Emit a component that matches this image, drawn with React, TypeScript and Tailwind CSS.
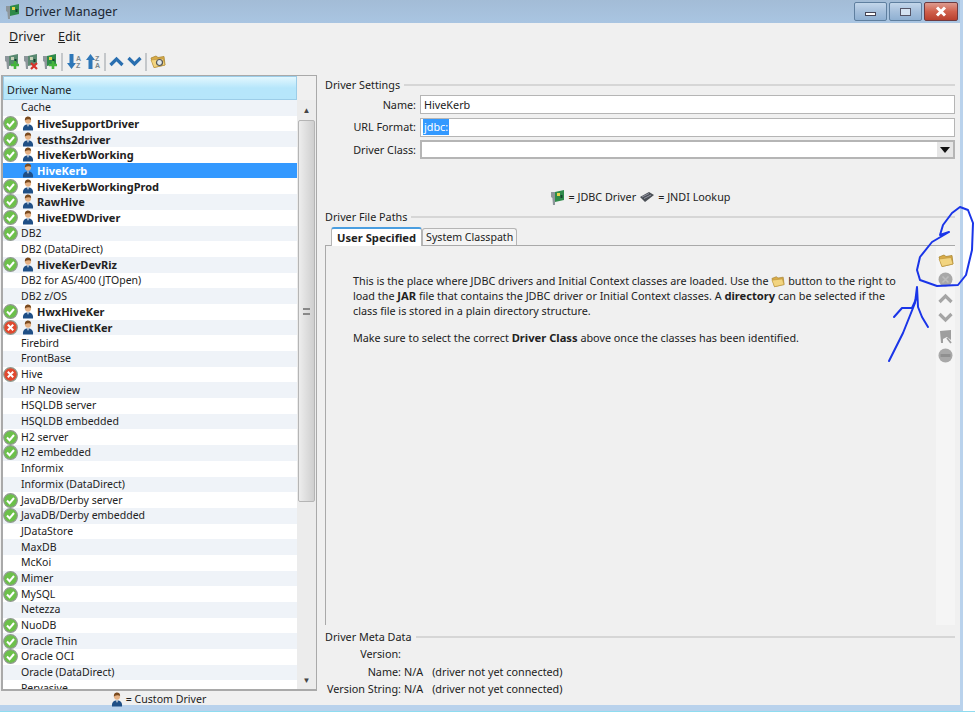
import React from 'react';

type Status = 'ok' | 'bad' | null;
type Row = { name: string; status?: Status; custom?: boolean };

const drivers: Row[] = [
  { name: 'Cache' },
  { name: 'HiveSupportDriver', status: 'ok', custom: true },
  { name: 'tesths2driver', status: 'ok', custom: true },
  { name: 'HiveKerbWorking', status: 'ok', custom: true },
  { name: 'HiveKerb', custom: true },
  { name: 'HiveKerbWorkingProd', status: 'ok', custom: true },
  { name: 'RawHive', status: 'ok', custom: true },
  { name: 'HiveEDWDriver', status: 'ok', custom: true },
  { name: 'DB2', status: 'ok' },
  { name: 'DB2 (DataDirect)' },
  { name: 'HiveKerDevRiz', status: 'ok', custom: true },
  { name: 'DB2 for AS/400 (JTOpen)' },
  { name: 'DB2 z/OS' },
  { name: 'HwxHiveKer', status: 'ok', custom: true },
  { name: 'HiveClientKer', status: 'bad', custom: true },
  { name: 'Firebird' },
  { name: 'FrontBase' },
  { name: 'Hive', status: 'bad' },
  { name: 'HP Neoview' },
  { name: 'HSQLDB server' },
  { name: 'HSQLDB embedded' },
  { name: 'H2 server', status: 'ok' },
  { name: 'H2 embedded', status: 'ok' },
  { name: 'Informix' },
  { name: 'Informix (DataDirect)' },
  { name: 'JavaDB/Derby server', status: 'ok' },
  { name: 'JavaDB/Derby embedded', status: 'ok' },
  { name: 'JDataStore' },
  { name: 'MaxDB' },
  { name: 'McKoi' },
  { name: 'Mimer', status: 'ok' },
  { name: 'MySQL', status: 'ok' },
  { name: 'Netezza' },
  { name: 'NuoDB', status: 'ok' },
  { name: 'Oracle Thin', status: 'ok' },
  { name: 'Oracle OCI', status: 'ok' },
  { name: 'Oracle (DataDirect)' },
  { name: 'Pervasive' },
];

const StatusIcon = ({ status }: { status: 'ok' | 'bad' }) => (
  <svg width="15" height="15" viewBox="0 0 15 15">
    <circle cx="7.5" cy="7.5" r="6.8" fill={status === 'ok' ? '#6cc04a' : '#e0492f'} stroke="#8f9a8f" strokeWidth="1.2" />
    {status === 'ok' ? (
      <path d="M4 7.5 L6.6 10.2 L11 5" fill="none" stroke="#fff" strokeWidth="2" />
    ) : (
      <path d="M4.8 4.8 L10.2 10.2 M10.2 4.8 L4.8 10.2" fill="none" stroke="#fff" strokeWidth="2" />
    )}
  </svg>
);

const UserIcon = () => (
  <svg width="12" height="15" viewBox="0 0 12 15">
    <path d="M1 14.5 C0.6 10.5 2.5 8.6 6 8.6 C9.5 8.6 11.4 10.5 11 14.5 Z" fill="#1f4f86" />
    <path d="M5 8.6 L6 11 L7 8.6 Z" fill="#e8e8e8" />
    <circle cx="6" cy="4.6" r="3.1" fill="#e5b184" />
    <path d="M2.9 4.4 C2.8 1.4 4.5 0.6 6 0.6 C7.8 0.6 9.2 1.6 9.1 4 C7.8 2.9 5 3 2.9 4.4 Z" fill="#7a4a1e" />
  </svg>
);

const CardIcon = ({ mark, faded }: { mark?: 'plus' | 'x'; faded?: boolean }) => (
  <svg width="16" height="17" viewBox="0 0 16 17">
    <path d="M1 3 L5 3 L5 16 L3 16 L2.4 9 L1 8 Z" fill="#8d969b" />
    <path d="M5 3 L14 1 L14 11 L5 13 Z" fill={faded ? '#5b8a72' : '#2f8a4a'} />
    <rect x="7" y="4" width="3" height="3" fill={faded ? '#c7d2b8' : '#e6d34a'} />
    <rect x="10.5" y="6" width="2" height="3" fill="#12452a" />
    {mark === 'plus' && <path d="M11 8 V16 M7 12 H15" stroke="#45b53c" strokeWidth="2.6" />}
    {mark === 'x' && <path d="M8 10 L14 16 M14 10 L8 16" stroke="#d6322a" strokeWidth="2.2" />}
  </svg>
);

const SortIcon = ({ up }: { up?: boolean }) => (
  <svg width="16" height="17" viewBox="0 0 16 17">
    <path d={up ? 'M5.5 1 L10 7 H7.5 V16 H3.5 V7 H1 Z' : 'M3.5 1 H7.5 V10 H10 L5.5 16 L1 10 H3.5 Z'} fill="#2f77b8" />
    <text x="10" y="7.5" fontSize="7" fontWeight="700" fill="#7b858b" fontFamily="Liberation Sans, sans-serif">{up ? 'Z' : 'A'}</text>
    <text x="10" y="15" fontSize="7" fontWeight="700" fill="#7b858b" fontFamily="Liberation Sans, sans-serif">{up ? 'A' : 'Z'}</text>
  </svg>
);

const Chevron = ({ up, color = '#2a6fb0' }: { up?: boolean; color?: string }) => (
  <svg width="15" height="11" viewBox="0 0 15 11">
    <path d={up ? 'M1.5 9 L7.5 3 L13.5 9' : 'M1.5 2 L7.5 8 L13.5 2'} fill="none" stroke={color} strokeWidth="3.2" />
  </svg>
);

const FolderIcon = ({ lens, size = 16 }: { lens?: boolean; size?: number }) => (
  <svg width={size} height={size - 1} viewBox="0 0 16 15">
    <path d="M1 4 L6 2 L8 3.5 L14 2.5 L15 11 L4 13.5 Z" fill="#d9ab47" stroke="#a98632" strokeWidth="0.8" />
    <path d="M1 6 L13 4.5 L15 11 L4 13.5 Z" fill="#f2d47f" stroke="#b8923a" strokeWidth="0.6" />
    {lens && <circle cx="9.5" cy="8.5" r="3" fill="#dfe8ec" stroke="#555" strokeWidth="1.2" />}
  </svg>
);

const Sep = () => <div className="h-[18px] w-[2px] bg-[#c4c7ca]" />;

const Legend = ({ label }: { label: string }) => (
  <div className="flex h-[16px] items-center gap-[4px]">
    <span>{label}</span>
    <div className="h-[2px] flex-1 bg-[#d6d6d6]" />
  </div>
);

const WinBtn = ({ children, close }: { children: React.ReactNode; close?: boolean }) => (
  <div
    className={`flex h-[19px] items-center justify-center rounded-[2px] border ${
      close
        ? 'w-[34px] border-[#6e3a3f] bg-gradient-to-b from-[#dc9a8e] via-[#d0604c] to-[#b8402e]'
        : 'w-[33px] border-[#5f7f9f] bg-gradient-to-b from-[#c3d6ea] via-[#a6c0dc] to-[#8fb0d2]'
    }`}
  >
    {children}
  </div>
);

const Field = ({ label, children }: { label: string; children: React.ReactNode }) => (
  <div className="flex items-center">
    <span className="w-[95px] pr-[4px] text-right">{label}</span>
    {children}
  </div>
);

export default function App() {
  return (
    <div
      className="relative h-[713px] w-[975px] overflow-hidden bg-white text-[10.8px] leading-[16px] text-[#222]"
      style={{ fontFamily: '"Noto Sans", "Open Sans", sans-serif' }}
    >
      <div className="flex h-[711px] w-[963px] flex-col border-b-[6px] border-r-[3px] border-[#b9d2ec] bg-[#9fbcd9]">
        {/* title bar */}
        <div className="flex h-[23px] shrink-0 items-center bg-gradient-to-b from-[#a3bcd6] to-[#a9c5e2] pl-[5px] pr-[2px]">
          <CardIcon />
          <span className="ml-[4px] text-[12.5px] text-[#1c2733]">Driver Manager</span>
          <div className="ml-auto flex gap-[2px]">
            <WinBtn><div className="mt-[5px] h-[4px] w-[11px] border border-[#445] bg-white" /></WinBtn>
            <WinBtn><div className="h-[8px] w-[11px] border-[1.5px] border-[#556] bg-[#d5e3f2]" /></WinBtn>
            <WinBtn close>
              <svg width="12" height="11" viewBox="0 0 12 11">
                <path d="M2 1.5 L10 9.5 M10 1.5 L2 9.5" stroke="#fff" strokeWidth="3" />
              </svg>
            </WinBtn>
          </div>
        </div>

        <div className="flex min-h-0 flex-1 flex-col bg-[#f0f0f0] pl-[1px]">
          {/* menu */}
          <div className="flex h-[27px] shrink-0 items-center gap-[13px] pl-[8px] text-[12.5px]">
            <span><u>D</u>river</span>
            <span><u>E</u>dit</span>
          </div>
          {/* toolbar */}
          <div className="flex h-[23px] shrink-0 items-center gap-[3px] pl-[3px]">
            <CardIcon mark="plus" faded />
            <CardIcon mark="x" faded />
            <CardIcon mark="plus" />
            <Sep />
            <SortIcon />
            <SortIcon up />
            <Sep />
            <Chevron up />
            <Chevron />
            <Sep />
            <FolderIcon lens />
          </div>

          <div className="flex min-h-0 flex-1 pt-[2px]">
            {/* driver list */}
            <div className="flex w-[324px] shrink-0 flex-col">
              <div className="flex h-[616px] w-[316px] shrink-0 border-b-2 border-l-2 border-r border-t border-[#a9a9a9]">
                <div className="flex min-w-0 flex-1 flex-col">
                  <div className="flex h-[24px] shrink-0 items-center border border-[#9ccde8] bg-gradient-to-b from-[#e2f7fe] via-[#b6e6fb] to-[#b6e6fb] pl-[3px] pt-[3px]">
                    Driver Name
                  </div>
                  <div className="min-h-0 flex-1 overflow-hidden bg-white text-[10.5px]">
                    {drivers.map((d, i) => {
                      const selected = d.name === 'HiveKerb';
                      return (
                        <div
                          key={d.name}
                          className={`flex h-[15.7px] items-center leading-[15px] ${
                            selected ? 'bg-[#3399ff] text-white' : i % 2 === 0 ? 'bg-[#eff3f8]' : 'bg-white'
                          }`}
                        >
                          <div className="flex w-[15px] shrink-0 justify-center">
                            {d.status && <StatusIcon status={d.status} />}
                          </div>
                          {d.custom && (
                            <div className="flex w-[16px] shrink-0 justify-end">
                              <UserIcon />
                            </div>
                          )}
                          <span className={`whitespace-nowrap pl-[3px] ${d.custom ? 'text-[11px] font-bold' : ''}`}>{d.name}</span>
                        </div>
                      );
                    })}
                  </div>
                </div>
                {/* scrollbar */}
                <div className="flex w-[19px] shrink-0 flex-col items-center bg-[#ececec]">
                  <div className="h-[24px] w-full shrink-0 bg-[#f0f0f0]" />
                  <div className="flex h-[20px] shrink-0 items-center justify-center text-[8px] text-[#444]">▲</div>
                  <div className="flex h-[382px] w-[17px] shrink-0 items-center justify-center rounded-[2px] border border-[#b5b5b5] bg-gradient-to-r from-[#ededed] to-[#cfcfcf]">
                    <div className="h-[7px] w-[7px] border-y-2 border-[#888]" />
                  </div>
                  <div className="flex-1" />
                  <div className="flex h-[18px] shrink-0 items-center justify-center text-[8px] text-[#444]">▼</div>
                </div>
              </div>
              <div className="flex flex-1 items-center justify-center gap-[3px] pr-[9px] text-[10.6px]">
                <UserIcon />
                <span>= Custom Driver</span>
              </div>
            </div>

            {/* settings */}
            <div className="flex min-w-0 flex-1 flex-col pr-[5px] pt-[2px]">
              <Legend label="Driver Settings" />
              <div className="mt-[2px] flex shrink-0 flex-col gap-[3.5px]">
                <Field label="Name:">
                  <div className="flex h-[19px] flex-1 items-center border border-[#b5b5b5] bg-white pl-[3px]">HiveKerb</div>
                </Field>
                <Field label="URL Format:">
                  <div className="flex h-[19px] flex-1 items-center border border-[#b5b5b5] bg-white pl-[2px]">
                    <span className="bg-[#3399ff] px-[1px] text-white">jdbc:</span>
                  </div>
                </Field>
                <Field label="Driver Class:">
                  <div className="flex h-[19px] flex-1 items-center justify-end border-2 border-[#b5b5b5] bg-white">
                    <div className="flex h-full w-[16px] items-center justify-center bg-[#e6e6e6]">
                      <svg width="10" height="6" viewBox="0 0 10 6"><path d="M0 0 H10 L5 6 Z" fill="#111" /></svg>
                    </div>
                  </div>
                </Field>
              </div>

              <div className="mt-[29px] flex h-[18px] shrink-0 items-center justify-center gap-[3px]">
                <CardIcon />
                <span>= JDBC Driver</span>
                <svg width="16" height="13" viewBox="0 0 16 13">
                  <path d="M1 6 L10 1 L15 4 L6 11 Z" fill="#4a4f55" />
                  <path d="M3 6 L10 2.5 M5 7.5 L12 4" stroke="#aab" strokeWidth="0.8" />
                </svg>
                <span>= JNDI Lookup</span>
              </div>

              <div className="mt-[3px]"><Legend label="Driver File Paths" /></div>

              <div className="mt-[2px] flex h-[18px] shrink-0 items-end pl-[6px]">
                <div className="z-10 -mb-[1px] flex h-[19px] items-center rounded-t-[3px] border-x border-t-2 border-x-[#b5b5b5] border-t-[#4a9ee0] bg-white px-[5px] text-[11.2px] font-bold">
                  User Specified
                </div>
                <div className="flex h-[17px] items-center rounded-t-[3px] border-x border-t border-[#b5b5b5] bg-[#f4f4f4] px-[3px] text-[10.6px]">
                  System Classpath
                </div>
              </div>

              <div className="flex h-[380px] shrink-0 border-l border-t border-[#a9a9a9]">
                <div className="flex-1 pl-[27px] pr-[36px] pt-[27px] leading-[15px]">
                  <p>
                    This is the place where JDBC drivers and Initial Context classes are loaded. Use the{' '}
                    <span className="inline-block h-[13px] align-[-3px] leading-none"><FolderIcon size={14} /></span> button to the right to load the{' '}
                    <b className="text-[11.2px]">JAR</b> file that contains the JDBC driver or Initial Context classes. A <b className="text-[11.2px]">directory</b> can be
                    selected if the class file is stored in a plain directory structure.
                  </p>
                  <p className="mt-[12px]">
                    Make sure to select the correct <b className="text-[11.2px]">Driver Class</b> above once the classes has been identified.
                  </p>
                </div>
                <div className="flex w-[19px] shrink-0 flex-col items-center bg-[#f5f5f5] pt-[5px]">
                  <div className="flex h-[19px] items-center"><FolderIcon /></div>
                  <div className="flex h-[19px] items-center">
                    <svg width="15" height="15" viewBox="0 0 15 15">
                      <circle cx="7.5" cy="7.5" r="7" fill="#a8a8a8" />
                      <path d="M4.5 4.5 L10.5 10.5 M10.5 4.5 L4.5 10.5" stroke="#bcbcbc" strokeWidth="1.6" />
                    </svg>
                  </div>
                  <div className="flex h-[19px] items-center"><Chevron up color="#a5a5a5" /></div>
                  <div className="flex h-[19px] items-center"><Chevron color="#a5a5a5" /></div>
                  <div className="flex h-[19px] items-center">
                    <svg width="14" height="15" viewBox="0 0 14 15">
                      <path d="M1 2 L12 1 V11 L8 8 L4 10 V14 H2 Z" fill="#9e9e9e" />
                      <path d="M8 9 L12 14" stroke="#9e9e9e" strokeWidth="1.8" />
                    </svg>
                  </div>
                  <div className="flex h-[19px] items-center">
                    <svg width="15" height="15" viewBox="0 0 15 15">
                      <circle cx="7.5" cy="7.5" r="7" fill="#a8a8a8" />
                      <rect x="2.5" y="6" width="10" height="3" fill="#8f8f8f" />
                    </svg>
                  </div>
                </div>
              </div>

              <div className="mt-[4px]"><Legend label="Driver Meta Data" /></div>
              <div className="mt-[1px] flex flex-col gap-[1.5px] text-[10.8px]">
                <div className="flex"><span className="w-[76px] whitespace-nowrap text-right">Version:</span></div>
                <div className="flex"><span className="w-[76px] whitespace-nowrap text-right">Name:</span><span className="ml-[3px]">N/A</span><span className="ml-[9px]">(driver not yet connected)</span></div>
                <div className="flex"><span className="w-[76px] whitespace-nowrap text-right">Version String:</span><span className="ml-[3px]">N/A</span><span className="ml-[9px]">(driver not yet connected)</span></div>
              </div>
            </div>
          </div>
        </div>
      </div>
      <div className="h-[1px] w-full bg-[#8fdcf0]" />

      {/* hand-drawn annotation */}
      <svg className="absolute left-0 top-0" width="975" height="713" viewBox="0 0 975 713" fill="none" stroke="#1a35e8" strokeWidth="2" strokeLinecap="round" strokeLinejoin="round">
        <path d="M949 232 L940 235 L943 225 L952 213 L960 207 L968 210 L973 223 L972 250 L966 275 L958 285 L937 286 L920 280 L917 270 L920 257 L932 242 L949 232" />
        <path d="M889 361 L903 333 L915 303 L917 287 L918 307 L922 317 L928 327" />
        <path d="M894 317 L902 308 L912 308 L917 297" />
      </svg>
    </div>
  );
}
